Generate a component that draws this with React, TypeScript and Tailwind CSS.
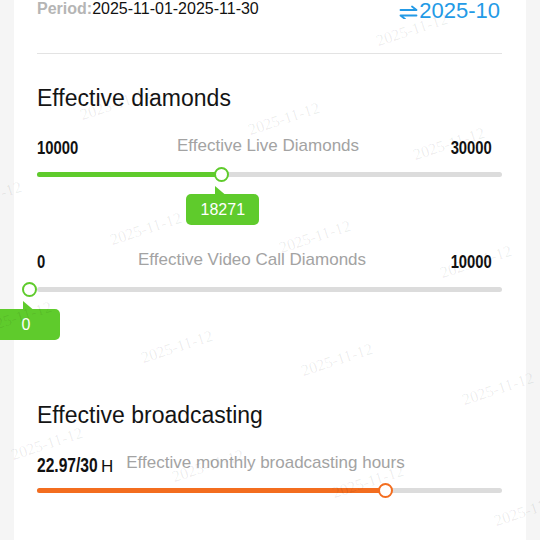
import React from "react";

const GREEN = "#5fcb2c";
const ORANGE = "#f36d1f";

const marks: [number, number][] = [
  [412, 30],
  [116, 104],
  [284, 119],
  [449, 144],
  [-14, 198],
  [146, 229],
  [315, 237],
  [476, 262],
  [16, 318],
  [177, 347],
  [337, 360],
  [498, 389],
  [47, 444],
  [208, 466],
  [368, 482],
  [530, 510],
];

function Num({ children, w, size = 19, right = false }: { children: React.ReactNode; w: number; size?: number; right?: boolean }) {
  return (
    <span className="relative block whitespace-nowrap" style={{ width: w }}>
      <span
        className={`absolute top-0 inline-block font-bold text-[#111] ${right ? "right-0 origin-right" : "left-0 origin-left"} scale-x-[0.78]`}
        style={{ fontSize: size, lineHeight: `${size}px` }}
      >
        {children}
      </span>
      <span className="invisible block" style={{ fontSize: size, lineHeight: `${size}px` }}>0</span>
    </span>
  );
}

function Track({
  pct,
  color,
  tooltip,
  tipOffset,
  tipWidth,
}: {
  pct: number;
  color: string;
  tooltip?: string;
  tipOffset?: number;
  tipWidth?: number;
}) {
  const thumbLeft = `calc(${pct * 100}% - 15px)`;
  return (
    <div className="relative h-[5px] w-full rounded-full bg-[#dcdcdc]">
      {pct > 0 && (
        <div
          className="absolute left-0 top-0 h-[5px] rounded-full"
          style={{ width: `calc(${pct * 100}% - 8px)`, backgroundColor: color }}
        />
      )}
      <div
        className="absolute top-[-5px] h-[15px] w-[15px] rounded-full border-2 bg-white"
        style={{ left: thumbLeft, borderColor: color }}
      />
      {tooltip !== undefined && (
        <>
          <svg
            className="absolute top-[14px]"
            width="10"
            height="8"
            viewBox="0 0 10 8"
            style={{ left: `calc(${pct * 100}% - 14px)` }}
          >
            <polygon points="0,0 0,8.5 10,8.5" fill={GREEN} />
          </svg>
          <div
            className="absolute top-[22px] flex h-[31px] items-center justify-center rounded-[5px] text-[16px] leading-none text-white"
            style={{
              left: `calc(${pct * 100}% - 15px - ${tipOffset}px)`,
              width: tipWidth,
              backgroundColor: GREEN,
            }}
          >
            {tooltip}
          </div>
        </>
      )}
    </div>
  );
}

export default function App() {
  return (
    <div className="relative h-[540px] w-[540px] overflow-hidden bg-[#f5f5f5] font-['Liberation_Sans',Arial,sans-serif]">
      <div className="mx-[14px] bg-white pb-[60px] pl-[23px] pr-[24px]">
        {/* header */}
        <div className="flex items-start justify-between">
          <div className="whitespace-nowrap text-[16px] leading-[18px]">
            <span className="font-bold text-[#b5b5b5]">Period:</span>
            <span className="text-[#111]">2025-11-01-2025-11-30</span>
          </div>
          <div className="mr-[2px] flex items-center gap-[1px] text-[22px] leading-[22px] text-[#239ae6]">
            <svg width="19" height="14" viewBox="0 0 19 14" className="mt-[2px]" fill="none" stroke="#239ae6" strokeWidth="1.8" strokeLinecap="round" strokeLinejoin="round">
              <path d="M1.5 5H17.5L13 1.5" />
              <path d="M17.5 10.5H1.5L6 14" />
            </svg>
            <span>2025-10</span>
          </div>
        </div>
        <div className="mt-[31px] h-px bg-[#e3e3e3]" />

        {/* Effective diamonds */}
        <div className="mt-[33px] text-[23px] leading-[23px] text-[#141414]">Effective diamonds</div>

        <div className="mt-[27px] flex items-start">
          <div className="mt-[1px]">
            <Num w={41}>10000</Num>
          </div>
          <span className="ml-[99px] whitespace-nowrap text-[17px] leading-[17px] text-[#a3a3a3]">Effective Live Diamonds</span>
          <div className="ml-auto mr-[10px] mt-[1px]">
            <Num w={42} right>
              30000
            </Num>
          </div>
        </div>
        <div className="mt-[15px]">
          <Track pct={0.41355} color={GREEN} tooltip="18271" tipOffset={28} tipWidth={73} />
        </div>

        <div className="mt-[74px] flex items-start">
          <div className="mt-[1px]">
            <Num w={8}>0</Num>
          </div>
          <span className="ml-[93px] whitespace-nowrap text-[17px] leading-[17px] text-[#a3a3a3]">Effective Video Call Diamonds</span>
          <div className="ml-auto mr-[10px] mt-[1px]">
            <Num w={42} right>
              10000
            </Num>
          </div>
        </div>
        <div className="mt-[16px]">
          <Track pct={0} color={GREEN} tooltip="0" tipOffset={30} tipWidth={68} />
        </div>

        {/* Effective broadcasting */}
        <div className="mt-[112px] text-[23px] leading-[23px] text-[#141414]">Effective broadcasting</div>

        <div className="mt-[27px] flex items-start">
          <div className="mt-[1px]">
            <Num w={61} size={20}>
              22.97/30
            </Num>
          </div>
          <span className="ml-[3px] mt-[4px] text-[17px] leading-[17px] text-[#111]">H</span>
          <span className="ml-[13px] whitespace-nowrap text-[17px] leading-[17px] text-[#a3a3a3]">Effective monthly broadcasting hours</span>
        </div>
        <div className="mt-[13px]">
          <Track pct={22.97 / 30} color={ORANGE} />
        </div>
      </div>

      {/* watermarks */}
      <div className="pointer-events-none absolute inset-0">
        {marks.map(([x, y], i) => (
          <span
            key={i}
            className="absolute whitespace-nowrap font-['Liberation_Serif',serif] text-[16px] leading-none text-[rgba(0,0,0,0.08)]"
            style={{ left: x, top: y, transform: "translate(-50%, -50%) rotate(-18deg)" }}
          >
            2025-11-12
          </span>
        ))}
      </div>
    </div>
  );
}
